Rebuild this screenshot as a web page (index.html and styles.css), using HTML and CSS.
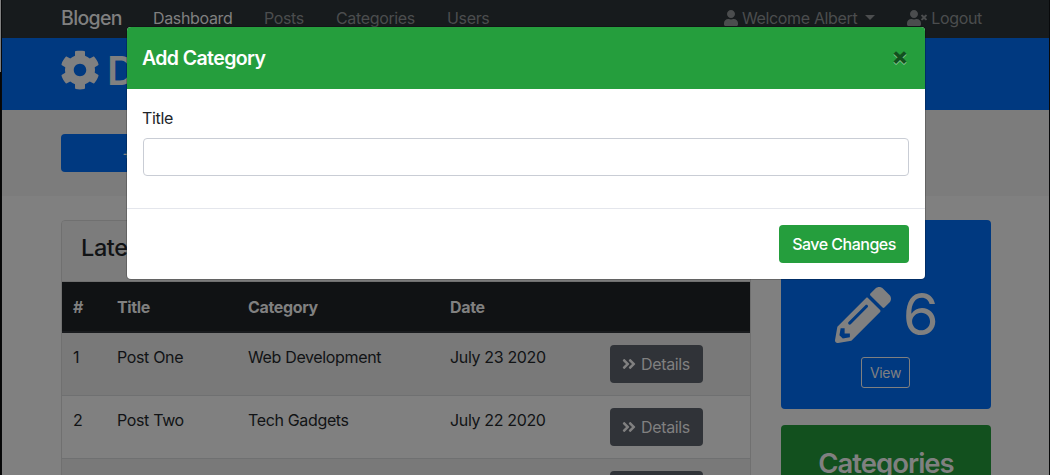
FILE: index.html
```html
<!DOCTYPE html>
<html lang="en">
<head>
<meta charset="utf-8">
<title>Blogen</title>
<link rel="stylesheet" href="styles.css">
</head>
<body>
<svg class="defs" aria-hidden="true">
  <symbol id="user" viewBox="0 0 448 512"><path d="M224 256c70.7 0 128-57.3 128-128S294.7 0 224 0 96 57.3 96 128s57.3 128 128 128zm89.6 32h-16.7c-22.2 10.2-46.9 16-72.9 16s-50.6-5.8-72.9-16h-16.7C60.2 288 0 348.2 0 422.4V464c0 26.5 21.5 48 48 48h352c26.5 0 48-21.5 48-48v-41.6c0-74.2-60.2-134.4-134.4-134.4z"/></symbol>
  <symbol id="user-times" viewBox="0 0 640 512"><path d="M224 256c70.7 0 128-57.3 128-128S294.7 0 224 0 96 57.3 96 128s57.3 128 128 128zm89.6 32h-16.7c-22.2 10.2-46.9 16-72.9 16s-50.6-5.8-72.9-16h-16.7C60.2 288 0 348.2 0 422.4V464c0 26.500 21.500 48 48 48h352c26.500 0 48-21.500 48-48v-41.600c0-74.200-60.200-134.400-134.400-134.400z"/><path d="M589.6 240l45.600-45.600c6.300-6.300 6.300-16.500 0-22.800l-22.800-22.800c-6.300-6.300-16.500-6.300-22.800 0L544 194.400l-45.600-45.600c-6.300-6.300-16.500-6.300-22.800 0l-22.800 22.800c-6.300 6.300-6.300 16.500 0 22.800l45.600 45.600-45.600 45.600c-6.300 6.300-6.300 16.500 0 22.800l22.800 22.800c6.300 6.300 16.500 6.300 22.800 0l45.600-45.600 45.600 45.600c6.300 6.300 16.500 6.300 22.800 0l22.800-22.800c6.300-6.300 6.300-16.500 0-22.800z"/></symbol>
  <symbol id="cog" viewBox="0 0 512 512"><path d="M487.4 315.7l-42.6-24.6c4.3-23.2 4.3-47 0-70.2l42.6-24.6c4.900-2.800 7.100-8.600 5.500-14-11.100-35.600-30-67.800-54.700-94.600-3.800-4.100-10-5.100-14.800-2.300L380.800 110c-17.900-15.400-38.500-27.300-60.800-35.100V25.800c0-5.600-3.900-10.500-9.400-11.700-36.700-8.200-74.300-7.800-109.200 0-5.500 1.200-9.400 6.100-9.400 11.700V75c-22.200 7.900-42.800 19.800-60.800 35.100L88.700 85.500c-4.900-2.800-11-1.900-14.800 2.300-24.700 26.700-43.600 58.900-54.700 94.600-1.700 5.400.6 11.200 5.500 14L67.300 221c-4.300 23.200-4.300 47 0 70.200l-42.600 24.600c-4.900 2.800-7.100 8.600-5.500 14 11.100 35.600 30 67.800 54.700 94.600 3.800 4.100 10 5.100 14.800 2.300l42.600-24.600c17.900 15.400 38.500 27.300 60.800 35.100v49.200c0 5.600 3.900 10.500 9.400 11.700 36.700 8.200 74.300 7.800 109.200 0 5.500-1.200 9.400-6.100 9.400-11.700v-49.200c22.200-7.900 42.800-19.800 60.800-35.100l42.600 24.600c4.900 2.800 11 1.900 14.800-2.300 24.700-26.700 43.600-58.900 54.700-94.600 1.500-5.500-.7-11.300-5.600-14.100zM256 336c-44.100 0-80-35.900-80-80s35.900-80 80-80 80 35.900 80 80-35.900 80-80 80z"/></symbol>
  <symbol id="pencil" viewBox="0 0 512 512"><path d="M497.900 142.100l-46.100 46.100c-4.700 4.700-12.300 4.700-17 0l-111-111c-4.700-4.700-4.700-12.300 0-17l46.100-46.100c18.700-18.700 49.100-18.700 67.900 0l60.100 60.100c18.800 18.700 18.800 49.100 0 67.900zM284.200 99.800L21.600 362.400.4 483.900c-2.900 16.400 11.400 30.600 27.800 27.800l121.500-21.300 262.600-262.600c4.700-4.700 4.700-12.300 0-17l-111-111c-4.800-4.700-12.400-4.700-17.100 0zM124.100 339.900c-5.500-5.500-5.500-14.300 0-19.800l154-154c5.500-5.500 14.300-5.500 19.800 0s5.500 14.300 0 19.800l-154 154c-5.500 5.500-14.300 5.500-19.800 0zM88 424h48v36.300l-64.500 11.300-31.100-31.100L51.700 376H88v48z"/></symbol>
  <symbol id="angles" viewBox="0 0 448 512"><path d="M224.300 273l-136 136c-9.400 9.400-24.600 9.400-33.900 0l-22.600-22.600c-9.400-9.400-9.400-24.600 0-33.900l96.400-96.400-96.400-96.400c-9.400-9.400-9.400-24.600 0-33.900L54.300 103c9.400-9.400 24.600-9.400 33.900 0l136 136c9.500 9.400 9.500 24.600.1 34zm192-34l-136-136c-9.400-9.400-24.600-9.400-33.900 0l-22.600 22.600c-9.400 9.400-9.400 24.600 0 33.900l96.400 96.400-96.400 96.400c-9.400 9.400-9.400 24.600 0 33.900l22.600 22.600c9.400 9.400 24.600 9.400 33.900 0l136-136c9.400-9.200 9.400-24.400 0-33.800z"/></symbol>
</svg>
<div class="page">
  <nav class="navbar">
    <a class="brand">Blogen</a>
    <div class="links">
      <a class="active link-dashboard">Dashboard</a>
      <a class="link-posts">Posts</a>
      <a class="link-categories">Categories</a>
      <a>Users</a>
    </div>
    <div class="account">
      <a class="welcome"><svg class="icon-user"><use href="#user"/></svg><span>Welcome Albert</span><i class="caret"></i></a>
      <a class="logout"><svg class="icon-logout"><use href="#user-times"/></svg><span>Logout</span></a>
    </div>
  </nav>
  <header class="banner"><svg class="icon-cog"><use href="#cog"/></svg><h1>Dashboard</h1></header>
  <section class="actions"><a class="add-post"><span>+</span> Add Post</a></section>
  <main class="content">
    <section class="posts">
      <h4 class="posts-title">Latest Posts</h4>
      <table>
        <colgroup><col class="c-id"><col class="c-title"><col class="c-category"><col class="c-date"><col></colgroup>
        <thead><tr><th>#</th><th>Title</th><th>Category</th><th>Date</th><th></th></tr></thead>
        <tbody>
          <tr><td>1</td><td>Post One</td><td>Web Development</td><td>July 23 2020</td><td><a class="details"><svg class="icon-angles"><use href="#angles"/></svg>Details</a></td></tr>
          <tr><td>2</td><td>Post Two</td><td>Tech Gadgets</td><td>July 22 2020</td><td><a class="details"><svg class="icon-angles"><use href="#angles"/></svg>Details</a></td></tr>
          <tr><td></td><td></td><td></td><td></td><td><a class="details"></a></td></tr>
        </tbody>
      </table>
    </section>
    <aside class="stats">
      <div class="stat stat-blue">
        <h3>Posts</h3>
        <div class="count"><svg class="icon-pencil"><use href="#pencil"/></svg><span>6</span></div>
        <a class="view">View</a>
      </div>
      <div class="stat stat-green"><h3>Categories</h3></div>
    </aside>
  </main>
</div>
<div class="modal">
  <div class="modal-header"><h5>Add Category</h5><button class="close">×</button></div>
  <div class="modal-body"><label for="title">Title</label><input id="title" type="text"></div>
  <div class="modal-footer"><button class="save">Save Changes</button></div>
</div>
</body>
</html>
```
FILE: styles.css
```css
* { box-sizing: border-box; }
body {
  margin: 0;
  height: 475px;
  overflow: hidden;
  position: relative;
  display: flex;
  background: linear-gradient(#808080 0 72px, #060606 72px) 0 0 / 1px 100% no-repeat, #08090a;
  font: 16px/24px Inter, "Liberation Sans", sans-serif;
  letter-spacing: -0.35px;
  color: #111315;
  white-space: nowrap;
}
h1, h3, h4, h5 { margin: 0; font-weight: 600; line-height: 1.2; }
svg { fill: currentColor; flex: none; }
.defs { position: absolute; width: 0; height: 0; }
.page {
  width: 1047px;
  height: 475px;
  margin-left: 2px;
  overflow: hidden;
  background: #808080;
}

.navbar {
  display: flex;
  align-items: center;
  height: 38px;
  padding: 0 67px 2px 59px;
  background: #171b1d;
  color: #4b4d4e;
}
.brand { width: 92px; font-size: 19.5px; letter-spacing: -0.65px; font-weight: 500; color: #808080; }
.links { display: flex; }
.links .active { color: #808080; }
.link-dashboard { width: 111px; }
.link-posts { width: 72px; }
.link-categories { width: 111px; }
.account { display: flex; margin-left: auto; gap: 32px; }
.welcome, .logout { display: flex; align-items: center; gap: 4px; }
.icon-user { width: 14px; height: 16px; }
.icon-logout { width: 20px; height: 16px; }
.caret { margin: 0 0 1px 4px; border: 5px solid transparent; border-top-color: currentColor; border-bottom: 0; }

.banner {
  display: flex;
  align-items: center;
  gap: 7px;
  height: 72px;
  padding: 0 0 8px 58px;
  background: #003980;
  color: #808080;
}
.banner h1 { font-size: 40px; padding-top: 2px; }
.icon-cog { width: 40px; height: 40px; }

.actions { height: 86px; padding: 24px 59px; background: #7c7c7c; }
.add-post {
  display: block;
  width: 210px;
  height: 38px;
  padding: 7px 0 0 61px;
  border-radius: 4px;
  background: #003980;
  color: #808080;
}

.content { display: flex; align-items: flex-start; gap: 30px; padding: 24px 58px 24px 59px; }
.posts { width: 690px; border: 1px solid #707070; border-radius: 4px; overflow: hidden; }
.posts-title {
  height: 61px;
  padding: 13px 19px;
  border-bottom: 1px solid #707070;
  background: #7c7c7c;
  font-size: 23.5px;
  font-weight: 500;
  letter-spacing: -0.4px;
}
table { width: 100%; table-layout: fixed; border-spacing: 0; }
.c-id { width: 44px; }
.c-title { width: 131px; }
.c-category { width: 202px; }
.c-date { width: 160px; }
th {
  height: 51px;
  padding: 1px 12px 0 11px;
  border-bottom: 2px solid #191b1e;
  background: #101214;
  color: #808080;
  text-align: left;
  font-weight: 700;
}
td { height: 63px; padding: 12px 0 12px 11px; border-top: 1px solid #6f7071; vertical-align: top; }
tbody tr:first-child td { height: 62px; border-top: 0; }
tbody tr:nth-child(odd) { background: #797979; }
.details {
  display: flex;
  align-items: center;
  gap: 5px;
  width: 93px;
  height: 38px;
  padding-left: 12px;
  border-radius: 4px;
  background: #303338;
  color: #808080;
}
.icon-angles { width: 14px; height: 16px; }

.stats { display: flex; flex-direction: column; gap: 16px; width: 210px; flex: none; }
.stat {
  display: flex;
  flex-direction: column;
  align-items: center;
  height: 189px;
  padding-top: 21px;
  border-radius: 4px;
  color: #808080;
}
.stat-blue { background: #003980; }
.stat-green { background: #12501e; }
.stat h3 { font-size: 27.5px; height: 33px; line-height: 35px; letter-spacing: -1px; }
.count { display: flex; align-items: center; gap: 12px; height: 67px; margin: 7px 0 9px; font-size: 58px; font-weight: 400; letter-spacing: -1.5px; line-height: 67px; }
.icon-pencil { width: 56px; height: 56px; }
.view {
  width: 49px;
  height: 31px;
  margin-right: 1px;
  border: 1px solid #808080;
  border-radius: 3px;
  text-align: center;
  font-size: 14px;
  line-height: 30px;
}

.modal {
  position: absolute;
  left: 127px;
  top: 27px;
  width: 798px;
  height: 252px;
  border-radius: 4px;
  background: #fff;
  box-shadow: 0 0 0 1px #00000033;
  overflow: hidden;
}
.modal-header {
  display: flex;
  justify-content: space-between;
  height: 62px;
  padding: 16px 16px 16px 15px;
  background: #259e3d;
  color: #fff;
}
.modal-header h5 { font-size: 19.5px; line-height: 30px; letter-spacing: -0.6px; }
.close {
  width: 18px;
  height: 28px;
  padding: 0;
  border: 0;
  background: none;
  color: #12501e;
  font: 800 24px/26px Inter, sans-serif;
  text-shadow: 0 1px 0 #92cf9e;
}
.modal-body { height: 119px; padding: 17px 16px; }
.modal-body label { display: block; margin: 0 0 8px -1px; color: #212529; }
.modal-body input { display: block; width: 766px; height: 38px; border: 1px solid #c9cdd5; border-radius: 4px; background: #fff; }
.modal-footer { display: flex; justify-content: flex-end; height: 71px; padding: 16px; border-top: 1px solid #e4e6ec; }
.save {
  width: 130px;
  height: 38px;
  padding: 0;
  border: 0;
  border-radius: 4px;
  background: #259e3d;
  color: #fff;
  font: inherit;
  font-weight: 500;
  letter-spacing: -0.5px;
}
```
